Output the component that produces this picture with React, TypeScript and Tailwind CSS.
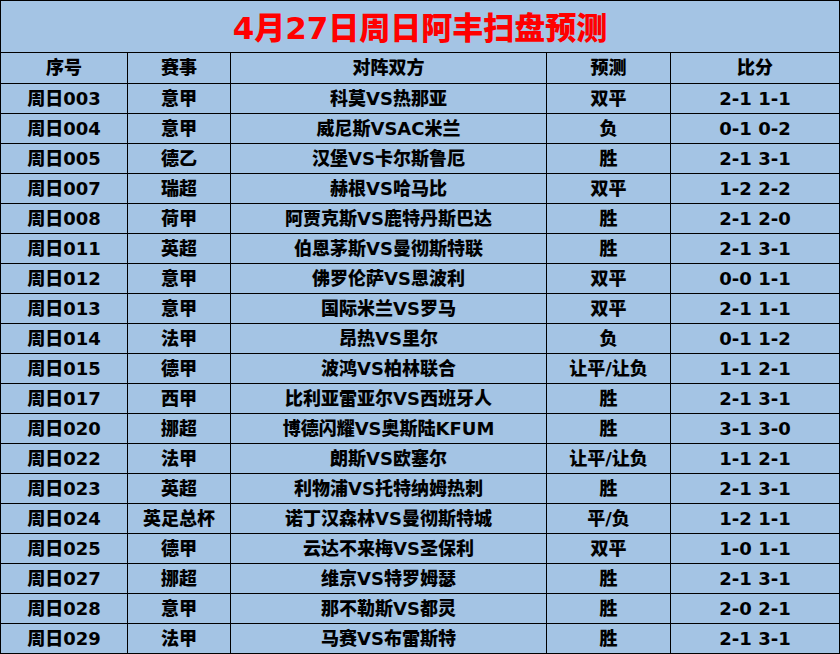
import React from "react";

const rows: [string, string, string, string, string][] = [
  ["周日003", "意甲", "科莫VS热那亚", "双平", "2-1 1-1"],
  ["周日004", "意甲", "威尼斯VSAC米兰", "负", "0-1 0-2"],
  ["周日005", "德乙", "汉堡VS卡尔斯鲁厄", "胜", "2-1 3-1"],
  ["周日007", "瑞超", "赫根VS哈马比", "双平", "1-2 2-2"],
  ["周日008", "荷甲", "阿贾克斯VS鹿特丹斯巴达", "胜", "2-1 2-0"],
  ["周日011", "英超", "伯恩茅斯VS曼彻斯特联", "胜", "2-1 3-1"],
  ["周日012", "意甲", "佛罗伦萨VS恩波利", "双平", "0-0 1-1"],
  ["周日013", "意甲", "国际米兰VS罗马", "双平", "2-1 1-1"],
  ["周日014", "法甲", "昂热VS里尔", "负", "0-1 1-2"],
  ["周日015", "德甲", "波鸿VS柏林联合", "让平/让负", "1-1 2-1"],
  ["周日017", "西甲", "比利亚雷亚尔VS西班牙人", "胜", "2-1 3-1"],
  ["周日020", "挪超", "博德闪耀VS奥斯陆KFUM", "胜", "3-1 3-0"],
  ["周日022", "法甲", "朗斯VS欧塞尔", "让平/让负", "1-1 2-1"],
  ["周日023", "英超", "利物浦VS托特纳姆热刺", "胜", "2-1 3-1"],
  ["周日024", "英足总杯", "诺丁汉森林VS曼彻斯特城", "平/负", "1-2 1-1"],
  ["周日025", "德甲", "云达不来梅VS圣保利", "双平", "1-0 1-1"],
  ["周日027", "挪超", "维京VS特罗姆瑟", "胜", "2-1 3-1"],
  ["周日028", "意甲", "那不勒斯VS都灵", "胜", "2-0 2-1"],
  ["周日029", "法甲", "马赛VS布雷斯特", "胜", "2-1 3-1"],
];

const headers = ["序号", "赛事", "对阵双方", "预测", "比分"];

export default function App() {
  return (
    <div
      className="w-[840px] h-[654px] bg-black p-px grid grid-cols-[126px_102px_315px_123px_168px] grid-rows-[51px_30px_repeat(19,29px)] gap-px font-black text-black"
      style={{ fontFamily: '"DejaVu Sans", "Noto Sans CJK SC", sans-serif' }}
    >
      <div className="col-span-5 bg-[#a4c4e4] flex items-center justify-center pt-[4px] text-[31px] leading-none text-[#ff0000]">
        4月27日周日阿丰扫盘预测
      </div>
      {headers.map((h) => (
        <div
          key={h}
          className="bg-[#a4c4e4] flex items-center justify-center text-[18px] leading-none"
        >
          {h}
        </div>
      ))}
      {rows.map((r) =>
        r.map((c, i) => (
          <div
            key={r[0] + i}
            className="bg-[#a4c4e4] flex items-center justify-center text-[18px] leading-none whitespace-nowrap"
          >
            {c}
          </div>
        ))
      )}
    </div>
  );
}
